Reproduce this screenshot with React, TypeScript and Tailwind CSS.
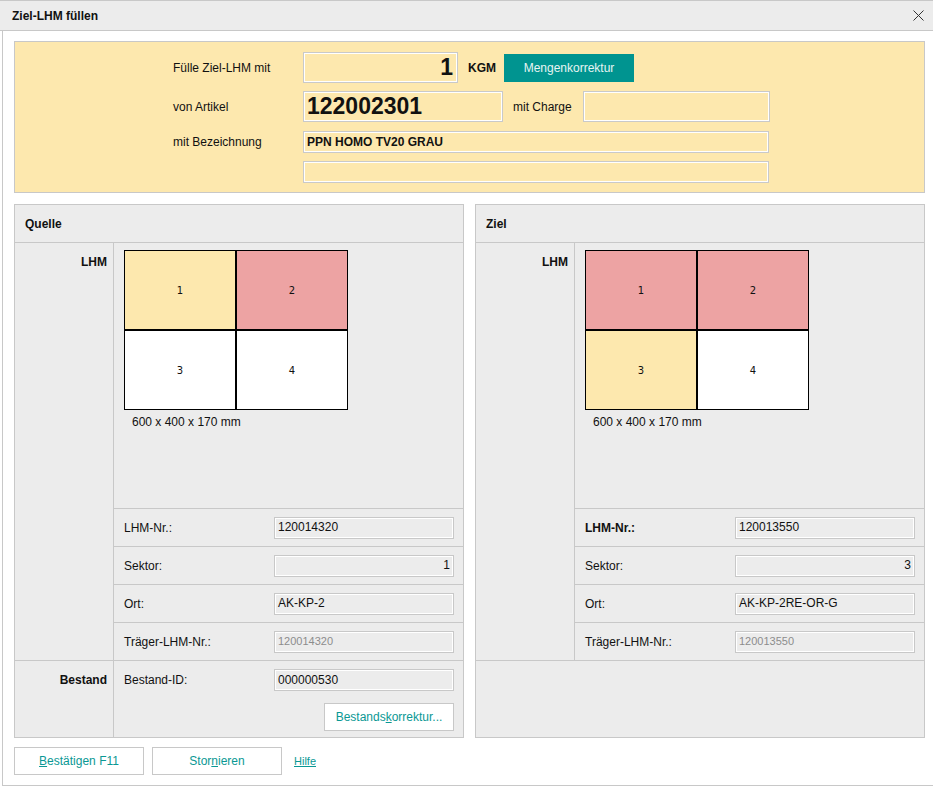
import React from "react";

const YELLOW = "bg-[#fde8ae]";

function Cell({ n, color }: { n: string; color: string }) {
  return (
    <div
      className={`w-[112px] h-[80px] border border-black flex items-center justify-center font-['DejaVu_Sans',Tahoma,sans-serif] text-[10px] ${color}`}
    >
      {n}
    </div>
  );
}

function FieldRow({
  label,
  value,
  bold,
  right,
  disabled,
}: {
  label: string;
  value: string;
  bold?: boolean;
  right?: boolean;
  disabled?: boolean;
}) {
  return (
    <div className="h-[38px] border-t border-[#c8c8c8] flex items-center pl-[10px] pr-[9px]">
      <span className={bold ? "flex-1 font-bold" : "flex-1"}>{label}</span>
      <div
        className={`w-[180px] h-[22px] border border-[#c8c8c8] shadow-[inset_0_0_0_1px_#ffffff] bg-[#ececec] flex items-center px-[3px] pb-[1px] ${
          right ? "justify-end" : ""
        } ${disabled ? "text-[#8c8c8c] text-[11px]" : ""}`}
      >
        {value}
      </div>
    </div>
  );
}

function Panel({
  title,
  colors,
  lhm,
  lhmBold,
  sektor,
  ort,
  traeger,
  bestand,
}: {
  title: string;
  colors: string[];
  lhm: string;
  lhmBold?: boolean;
  sektor: string;
  ort: string;
  traeger: string;
  bestand?: boolean;
}) {
  return (
    <div className="w-[450px] h-[534px] border border-[#c8c8c8] bg-[#ececec] flex flex-col">
      <div className="h-[38px] shrink-0 border-b border-[#c8c8c8] flex items-center pl-[10px] font-bold">
        {title}
      </div>
      <div className="flex shrink-0">
        <div className="w-[99px] shrink-0 border-r border-[#c8c8c8] pt-[12px] pr-[6px] text-right font-bold leading-[14px]">
          LHM
        </div>
        <div className="flex-1 flex flex-col">
          <div className="h-[265px] pt-[7px] pl-[10px]">
            <div className="flex flex-wrap w-[224px]">
              <Cell n="1" color={colors[0]} />
              <Cell n="2" color={colors[1]} />
              <Cell n="3" color={colors[2]} />
              <Cell n="4" color={colors[3]} />
            </div>
            <div className="pl-[8px] mt-[5px] leading-[14px]">600 x 400 x 170 mm</div>
          </div>
          <FieldRow label="LHM-Nr.:" value={lhm} bold={lhmBold} />
          <FieldRow label="Sektor:" value={sektor} right />
          <FieldRow label="Ort:" value={ort} />
          <FieldRow label="Träger-LHM-Nr.:" value={traeger} disabled />
        </div>
      </div>
      {bestand ? (
        <div className="flex-1 flex border-t border-[#c8c8c8]">
          <div className="w-[99px] shrink-0 border-r border-[#c8c8c8] pt-[8px] pr-[6px]">
            <div className="h-[22px] flex items-center justify-end font-bold">Bestand</div>
          </div>
          <div className="flex-1 flex flex-col pt-[8px] pl-[10px] pr-[9px]">
            <div className="h-[22px] flex items-center">
              <span className="flex-1">Bestand-ID:</span>
              <div className="w-[180px] h-[22px] border border-[#c8c8c8] shadow-[inset_0_0_0_1px_#ffffff] bg-[#ececec] flex items-center px-[3px] pb-[1px]">
                000000530
              </div>
            </div>
            <button className="self-end mt-[12px] w-[130px] h-[28px] bg-white border border-[#c8c8c8] text-[#0a9894] flex items-center justify-center">
              <span>
                Bestands<span className="underline">k</span>orrektur...
              </span>
            </button>
          </div>
        </div>
      ) : (
        <div className="flex-1 border-t border-[#c8c8c8]" />
      )}
    </div>
  );
}

const yInput =
  "border border-[#c9c9c9] shadow-[inset_0_0_0_1px_#ffffff] bg-[#fde8ae] flex items-center";

export default function App() {
  return (
    <div className="w-[933px] h-[786px] bg-white flex flex-col font-['Liberation_Sans',Arial,sans-serif] text-[12px] text-[#111111]">
      <div className="h-[31px] shrink-0 bg-[#ececec] border-t border-b border-[#c8c8c8] flex items-center justify-between pl-[12px] pr-[9px]">
        <span className="font-bold">Ziel-LHM füllen</span>
        <svg width="11" height="11" viewBox="0 0 11 11">
          <path d="M0.5 0.5 L10.5 10.5 M10.5 0.5 L0.5 10.5" stroke="#333" strokeWidth="1" fill="none" />
        </svg>
      </div>
      <div className="flex-1 ml-[2px] border-l border-b border-[#c8c8c8] pl-[11px] pr-[8px] pt-[10px] flex flex-col">
        <div className={`h-[152px] shrink-0 border border-[#c8c8c8] ${YELLOW} pl-[158px] pt-[10px] flex flex-col`}>
          <div className="h-[31px] flex items-center">
            <span className="w-[130px]">Fülle Ziel-LHM mit</span>
            <div className={`w-[155px] h-[31px] ${yInput} justify-end pr-[4px] text-[23px] font-bold`}>1</div>
            <span className="ml-[10px] font-bold">KGM</span>
            <button className="ml-[8px] w-[130px] h-[28px] bg-[#009490] text-[#e6f4f3] flex items-center justify-center">
              Mengenkorrektur
            </button>
          </div>
          <div className="h-[31px] mt-[8px] flex items-center">
            <span className="w-[130px]">von Artikel</span>
            <div className={`w-[200px] h-[31px] ${yInput} pl-[3px] text-[23px] font-bold`}>122002301</div>
            <span className="ml-[10px]">mit Charge</span>
            <div className={`ml-[11px] w-[187px] h-[31px] ${yInput}`} />
          </div>
          <div className="h-[22px] mt-[9px] flex items-center">
            <span className="w-[130px]">mit Bezeichnung</span>
            <div className={`w-[466px] h-[22px] ${yInput} pl-[3px] font-bold`}>PPN HOMO TV20 GRAU</div>
          </div>
          <div className="h-[22px] mt-[8px] flex items-center">
            <span className="w-[130px]" />
            <div className={`w-[466px] h-[22px] ${yInput}`} />
          </div>
        </div>

        <div className="flex gap-[11px] mt-[11px]">
          <Panel
            title="Quelle"
            colors={["bg-[#fde8ae]", "bg-[#eda3a3]", "bg-white", "bg-white"]}
            lhm="120014320"
            sektor="1"
            ort="AK-KP-2"
            traeger="120014320"
            bestand
          />
          <Panel
            title="Ziel"
            colors={["bg-[#eda3a3]", "bg-[#eda3a3]", "bg-[#fde8ae]", "bg-white"]}
            lhm="120013550"
            lhmBold
            sektor="3"
            ort="AK-KP-2RE-OR-G"
            traeger="120013550"
          />
        </div>

        <div className="flex items-center mt-[9px]">
          <button className="w-[130px] h-[28px] bg-white border border-[#c8c8c8] text-[#0a9894] flex items-center justify-center">
            <span>
              <span className="underline">B</span>estätigen F11
            </span>
          </button>
          <button className="ml-[8px] w-[130px] h-[28px] bg-white border border-[#c8c8c8] text-[#0a9894] flex items-center justify-center">
            <span>
              Stor<span className="underline">n</span>ieren
            </span>
          </button>
          <a className="ml-[12px] text-[#0a9894] underline text-[11px] cursor-pointer">Hilfe</a>
        </div>
      </div>
    </div>
  );
}
